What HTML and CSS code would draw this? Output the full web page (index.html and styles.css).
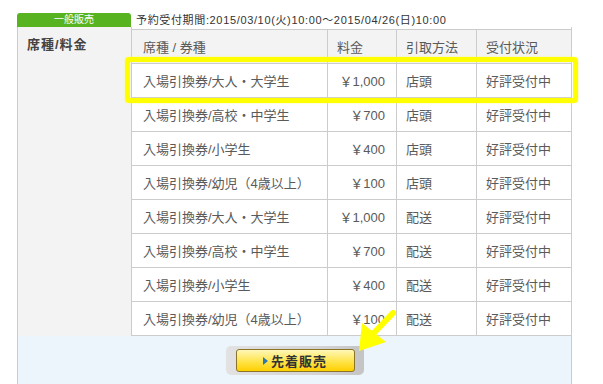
FILE: index.html
```html
<!DOCTYPE html>
<html lang="ja">
<head>
<meta charset="utf-8">
<link rel="stylesheet" href="styles.css">
</head>
<body>
<div class="sale">
  <div class="sale-head">
    <div class="tab">一般販売</div>
    <div class="period">予約受付期間:2015/03/10(火)10:00〜2015/04/26(日)10:00</div>
  </div>
  <div class="box">
    <div class="side">席種/料金</div>
    <div class="grid">
      <div class="row head"><div class="c c1">席種 / 券種</div><div class="c c2">料金</div><div class="c c3">引取方法</div><div class="c c4">受付状況</div></div>
      <div class="row"><div class="c c1">入場引換券/大人・大学生</div><div class="c c2 price">￥1,000</div><div class="c c3">店頭</div><div class="c c4">好評受付中</div></div>
      <div class="row"><div class="c c1">入場引換券/高校・中学生</div><div class="c c2 price">￥700</div><div class="c c3">店頭</div><div class="c c4">好評受付中</div></div>
      <div class="row"><div class="c c1">入場引換券/小学生</div><div class="c c2 price">￥400</div><div class="c c3">店頭</div><div class="c c4">好評受付中</div></div>
      <div class="row"><div class="c c1">入場引換券/幼児（4歳以上）</div><div class="c c2 price">￥100</div><div class="c c3">店頭</div><div class="c c4">好評受付中</div></div>
      <div class="row"><div class="c c1">入場引換券/大人・大学生</div><div class="c c2 price">￥1,000</div><div class="c c3">配送</div><div class="c c4">好評受付中</div></div>
      <div class="row"><div class="c c1">入場引換券/高校・中学生</div><div class="c c2 price">￥700</div><div class="c c3">配送</div><div class="c c4">好評受付中</div></div>
      <div class="row"><div class="c c1">入場引換券/小学生</div><div class="c c2 price">￥400</div><div class="c c3">配送</div><div class="c c4">好評受付中</div></div>
      <div class="row"><div class="c c1">入場引換券/幼児（4歳以上）</div><div class="c c2 price">￥100</div><div class="c c3">配送</div><div class="c c4">好評受付中</div></div>
    </div>
  </div>
  <div class="foot">
    <div class="btn-frame"><div class="btn"><span class="tri"></span>先着販売</div></div>
  </div>
  <div class="highlight"></div>
  <svg class="arrow" width="50" height="50" viewBox="0 0 50 50">
    <line x1="43" y1="3" x2="20" y2="27" stroke="#ffff00" stroke-width="6" stroke-linecap="round"/>
    <polygon points="9,41 12,13 36,32" fill="#ffff00"/>
  </svg>
</div>
</body>
</html>
```
FILE: styles.css
```css
html, body {
  margin: 0;
  padding: 0;
  background: #fff;
}
body {
  font-family: "Liberation Sans", "Noto Sans CJK JP", sans-serif;
  color: #5a5a5a;
}
.sale {
  position: relative;
  padding: 13px 0 0 17px;
  width: 555px;
}
.sale-head {
  display: flex;
  align-items: center;
  height: 14px;
}
.tab {
  width: 114px;
  height: 14px;
  background: #58b320;
  color: #fff;
  font-size: 10px;
  line-height: 14px;
  text-align: center;
  border-radius: 3px 3px 0 0;
}
.period {
  margin-left: 5px;
  font-size: 11px;
  letter-spacing: 0.65px;
  color: #333;
  line-height: 14px;
  white-space: nowrap;
}
.box {
  display: flex;
  border-left: 1px solid #ccc;
  border-right: 1px solid #ccc;
}
.side {
  flex: none;
  background: #f3f3f3;
  border-right: 1px solid #ccc;
  padding: 10px 0 0 9px;
  box-sizing: border-box;
  width: 114px;
  font-size: 13px;
  font-weight: bold;
  letter-spacing: 1px;
  color: #444;
  line-height: 16px;
}
.grid {
  flex: 1;
  margin-top: 2px;
  border-bottom: 1px solid #ccc;
}
.row {
  display: grid;
  grid-template-columns: 195px 69px 80px 95px;
  height: 34px;
  box-sizing: border-box;
  border-top: 1px solid #ccc;
}
.row.head {
  background: #f3f3f3;
}
.c {
  display: flex;
  align-items: center;
  font-size: 13px;
  white-space: nowrap;
}
.c1 { padding-left: 11px; }
.c2 { border-left: 1px solid #ccc; padding-left: 9px; }
.c3 { border-left: 1px solid #ccc; padding-left: 9px; }
.c4 { border-left: 1px solid #ccc; padding-left: 9px; }
.c2.price {
  justify-content: flex-end;
  padding: 0 11px 0 0;
}
.foot {
  background: #edf5fc;
  border-left: 1px solid #ccc;
  border-right: 1px solid #ccc;
  padding: 10px 0 10px;
  display: flex;
  justify-content: center;
}
.btn-frame {
  padding: 3px 9px 3px 10px;
  border-radius: 5px;
  background: linear-gradient(to right, #e2e2e2, #d2d2d2 70%, #c4c4c4);
}
.btn {
  width: 117px;
  height: 21px;
  border: 1px solid #8a7428;
  border-radius: 3px;
  background: linear-gradient(#fff7b8, #ffe44a 55%, #ffcf00);
  display: flex;
  align-items: center;
  justify-content: center;
  font-size: 13px;
  font-weight: bold;
  letter-spacing: 1px;
  color: #333;
}
.tri {
  width: 0;
  height: 0;
  border-left: 5px solid #2a78b4;
  border-top: 4px solid transparent;
  border-bottom: 4px solid transparent;
  margin-right: 3px;
}
.highlight {
  position: absolute;
  left: 125px;
  top: 57px;
  width: 453px;
  height: 46px;
  box-sizing: border-box;
  border: 5px solid #ffff00;
  border-radius: 4px;
  box-shadow: 0 0 2px #ffff66, inset 0 0 1px #ffff66;
}
.arrow {
  position: absolute;
  left: 350px;
  top: 310px;
}
```
